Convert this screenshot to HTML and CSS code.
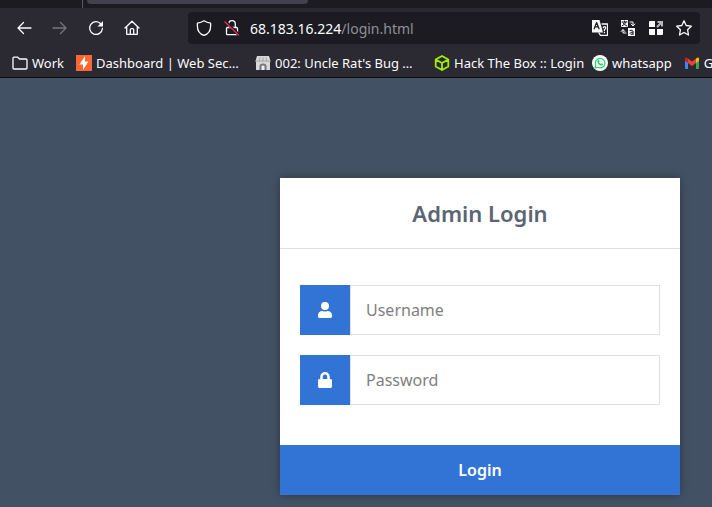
FILE: index.html
```html
<!DOCTYPE html>
<html lang="en">
<head>
<meta charset="utf-8">
<title>Admin Login</title>
<link rel="stylesheet" href="styles.css">
</head>
<body>
<header class="browser">
  <div class="tabs"><span class="divider"></span><span class="tab"></span></div>
  <div class="toolbar">
    <nav class="controls">
      <button type="button" aria-label="Back"><svg viewBox="0 0 16 16"><path d="M15 8H2M7.500 2.500L2 8l5.500 5.500"/></svg></button>
      <button type="button" class="dim" aria-label="Forward" disabled><svg viewBox="0 0 16 16"><path d="M1 8h13M8.500 2.500L14 8l-5.500 5.500"/></svg></button>
      <button type="button" aria-label="Reload"><svg viewBox="0 0 16 16"><path d="M13 4A6.400 6.400 0 1 0 14.400 8.500"/><path class="solid" d="M15 1v5.500H9.500z"/></svg></button>
      <button type="button" aria-label="Home"><svg viewBox="0 0 16 16"><path d="M1 8l7-6.700L15 8M2.700 7v7.300h10.600V7M6.300 14V9.700q0-1 1-1h1.400q1 0 1 1V14"/></svg></button>
    </nav>
    <div class="address">
      <svg viewBox="0 0 16 16"><path d="M8 .8C6 2.200 3.700 2.900 1.400 3.200v3c0 4.300 2.300 7.700 6.600 9.200 4.300-1.500 6.600-4.900 6.600-9.200v-3C12.300 2.900 10 2.200 8 .8z"/></svg>
      <svg viewBox="0 0 16 16"><path d="M4.700 7V4a3.300 3.300 0 0 1 6.600 0v3M3.500 7.500h9q1 0 1 1v5q0 1.200-1 1.200h-9q-1 0-1-1.200v-5q0-1 1-1z"/><path class="slash-gap" d="M2 2l13 13"/><path class="slash" d="M1 2l13.500 13"/></svg>
      <span class="url">68.183.16.224<span class="path">/login.html</span></span>
      <span class="actions">
        <button type="button" aria-label="Translate page"><svg viewBox="0 0 16 16"><path class="solid" d="M0 0h7.500l3.500 12.500H0z"/><path class="cut" d="M2.200 8.800L4.600 2.500 7 8.800M3 6.800h3.300"/><path d="M10 4h5.500v11.300h-7L7 13"/><path d="M11.300 7.700q.2-1 1.100-1 1.300 0 1.300 1.100 0 1-1.300 1.900v.8M12.400 12.300v.4"/></svg></button>
        <button type="button" aria-label="Translate text"><svg viewBox="0 0 16 16"><path class="solid" d="M1 0h7v7H1zM8 8h7v8H8z"/><path class="cut fine" d="M2 2h5M4.500 1v1M6 2q-.7 2.500-4 4M3 3q1 2 4 3M10 10.500q3-1 3 1v3M13 12q-3 0-3 1.500 0 1.500 3 .5"/><path class="fine" d="M10 2h3v3.500M11.200 4L13 6l1.800-2M6 13H3v-3M1.200 11.500L3 9.500l1.800 2"/></svg></button>
        <button type="button" aria-label="Extensions"><svg viewBox="0 0 16 16"><path class="solid" d="M2 1h5v6H1V2q0-1 1-1zM1 9h6v6H2q-1 0-1-1zM9 9h6v5q0 1-1 1H9z"/><path class="thick" d="M9 7l5-5M9.500 2H14v4.500"/></svg></button>
        <button type="button" aria-label="Bookmark page"><svg viewBox="0 0 16 16"><path d="M8 .8l2.200 4.700 5.100.7-3.700 3.600.9 5.200L8 12.500 3.500 15l.9-5.200L.7 6.200l5.100-.7z"/></svg></button>
      </span>
    </div>
  </div>
  <nav class="bookmarks">
    <a href="#"><svg viewBox="0 0 16 16"><path d="M1 13V3.200q0-1 1-1h3.700L7.500 4H14q1 0 1 1v8q0 1-1 1H2q-1 0-1-1z"/></svg>Work</a>
    <a href="#" class="long"><svg viewBox="0 0 16 16"><path fill="#ff6633" stroke="none" d="M0 0h16v16H0z"/><path fill="#fff" stroke="none" d="M9 1v5.500h3.500L7 15V9.500H3.500z"/></svg>Dashboard | Web Sec…</a>
    <a href="#" class="long"><svg viewBox="0 0 16 16"><path fill="#d8d8d8" stroke="none" d="M2 1h12l1.500 5-.5 1.500V15H1V7.500L.5 6z"/><path stroke="#9a9a9e" stroke-width=".8" d="M1 6h14M5 2.500L4.500 6M8 2.500V6M11 2.500l.5 3.500"/><path fill="#77777b" stroke="none" d="M4.500 15v-4q0-2.500 3.500-2.500t3.500 2.500v4z"/><path fill="#eee" stroke="none" d="M6.500 15v-3.500q0-1 1.500-1t1.500 1V15z"/></svg>002: Uncle Rat's Bug …</a>
    <a href="#" class="medium"><svg viewBox="0 0 16 16"><path stroke="#9fef00" stroke-width="1.800" d="M8 1l6.300 3.500v7L8 15l-6.300-3.500v-7zM2 4.700L8 8l6-3.300M8 8v7"/></svg>Hack The Box :: Login</a>
    <a href="#"><svg viewBox="0 0 16 16"><circle cx="8" cy="8" r="8" fill="#fff" stroke="none"/><path stroke="#25d366" stroke-width="1.200" d="M3 13l.8-2.700A4.800 4.800 0 1 1 5.700 12.300z"/><path fill="#25d366" stroke="none" d="M6.200 5l.8.100.5 1.400-.5.700q.6 1.200 1.900 1.800l.7-.7 1.400.7q0 1.500-1.500 1.600Q6 10 5.300 6.700 5.300 5.500 6.200 5z"/></svg>whatsapp</a>
    <a href="#"><svg class="mail" viewBox="0 0 16 16"><path fill="#4285f4" d="M1 4l3 2v8H2q-1 0-1-1z"/><path fill="#34a853" d="M15 4l-3 2v8h2q1 0 1-1z"/><path fill="#ea4335" d="M4 3.500l4 3 4-3V8l-4 3-4-3z"/><path fill="#c5221f" d="M1 4q0-2.500 3-.5V8L1 5.800z"/><path fill="#fbbc04" d="M15 4q0-2.500-3-.5V8l3-2.200z"/></svg>G</a>
  </nav>
</header>
<main>
  <form class="login">
    <h1>Admin Login</h1>
    <div class="fields">
      <div class="field">
        <label for="username" aria-label="Username"><svg viewBox="0 0 448 512"><path d="M224 256a128 128 0 1 0 0-256 128 128 0 0 0 0 256zm90 32h-17a174 174 0 0 1-146 0h-17C60 288 0 348 0 422v42c0 27 21 48 48 48h352c27 0 48-21 48-48v-42c0-74-60-134-134-134z"/></svg></label>
        <input id="username" type="text" placeholder="Username">
      </div>
      <div class="field">
        <label for="password" aria-label="Password"><svg viewBox="0 0 448 512"><path d="M400 224h-24v-72C376 68 308 0 224 0S72 68 72 152v72H48c-27 0-48 21-48 48v192c0 27 21 48 48 48h352c27 0 48-21 48-48V272c0-27-21-48-48-48zm-104 0H152v-72a72 72 0 0 1 144 0z"/></svg></label>
        <input id="password" type="password" placeholder="Password">
      </div>
    </div>
    <button class="submit" type="submit">Login</button>
  </form>
</main>
</body>
</html>
```
FILE: styles.css
```css
* { box-sizing: border-box; }
body {
  margin: 0;
  min-height: 100vh;
  overflow-x: hidden;
  background: #435165;
  font-family: "Noto Sans", sans-serif;
}
button { font: inherit; border: 0; padding: 0; background: none; }
.browser {
  background: #2b2a33;
  border-bottom: 1px solid #0c0c0d;
  color: #fbfbfe;
}
.browser svg {
  display: block;
  flex: none;
  width: 16px;
  height: 16px;
  fill: none;
  stroke: currentColor;
  stroke-width: 1.3px;
  stroke-linecap: round;
  stroke-linejoin: round;
}
.browser button { color: inherit; }
.tabs { display: flex; height: 8px; background: #1c1b22; }
.divider { width: 1px; margin-left: 82px; margin-right: 4px; background: #5b5b66; }
.tab { width: 221px; height: 4px; border-radius: 0 0 4px 4px; background: #42414d; }
.toolbar { display: flex; align-items: center; padding: 4px 12px 4px 16px; }
.controls { display: flex; gap: 20px; margin-right: 48px; }
.browser .dim { color: #76757c; }
.address {
  display: flex;
  flex: 1;
  align-items: center;
  gap: 12px;
  height: 32px;
  padding: 0 8px;
  border-radius: 4px;
  background: #1c1b22;
}
.url { font-size: 14px; margin-left: -2px; }
.path { color: #8f8f98; }
.actions { display: flex; gap: 12px; margin-left: auto; }
.browser .solid { fill: currentColor; stroke: none; }
.browser .cut { stroke: #1c1b22; }
.browser .fine { stroke-width: 1px; }
.browser .thick { stroke: #b8b8be; stroke-width: 2px; stroke-linecap: butt; stroke-linejoin: miter; }
.browser .slash { stroke: #e22850; stroke-width: 1.5px; }
.browser .slash-gap { stroke: #1c1b22; stroke-width: 3px; }
.browser .mail { stroke: none; }
.bookmarks { display: flex; gap: 12px; height: 29px; padding-left: 12px; }
.bookmarks a {
  display: flex;
  flex: none;
  align-items: center;
  gap: 4px;
  color: inherit;
  font-size: 13px;
  white-space: nowrap;
  text-decoration: none;
}
.bookmarks .long { width: 167px; }
.bookmarks .medium { width: 146px; }
main { display: flex; justify-content: flex-end; padding: 100px 32px 12px; }
.login {
  width: 400px;
  background: #fff;
  box-shadow: 0 0 9px rgba(0, 0, 0, 0.3);
}
h1 {
  margin: 0;
  padding: 20px 0;
  border-bottom: 1px solid #dee0e4;
  color: #5b6574;
  font-size: 22px;
  font-weight: 600;
  line-height: 30px;
  text-align: center;
}
.fields { display: grid; gap: 20px; padding: 36px 20px 40px; }
.field { display: flex; height: 50px; }
.field label {
  display: grid;
  place-items: center;
  width: 50px;
  background: #3274d6;
}
.field svg { width: 14px; height: 16px; fill: #fff; }
.field input {
  flex: 1;
  min-width: 0;
  padding: 0 15px;
  border: 1px solid #dee0e4;
  border-radius: 0;
  background: #fff;
  font: inherit;
  font-size: 16px;
}
.field input::placeholder { color: #808080; }
.submit {
  display: block;
  width: 100%;
  height: 50px;
  background: #3274d6;
  color: #fff;
  font-size: 16px;
  font-weight: 600;
}
```
